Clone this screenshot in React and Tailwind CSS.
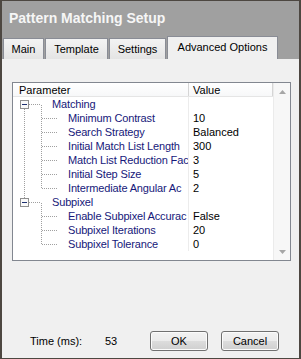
const rows = [
  { name: 'Matching', group: true, value: '' },
  { name: 'Minimum Contrast', value: '10' },
  { name: 'Search Strategy', value: 'Balanced' },
  { name: 'Initial Match List Length', value: '300' },
  { name: 'Match List Reduction Fac', value: '3' },
  { name: 'Initial Step Size', value: '5' },
  { name: 'Intermediate Angular Ac', value: '2' },
  { name: 'Subpixel', group: true, value: '' },
  { name: 'Enable Subpixel Accurac', value: 'False' },
  { name: 'Subpixel Iterations', value: '20' },
  { name: 'Subpixel Tolerance', value: '0' },
]

const tabs = [
  { label: 'Main', w: 'w-[41px]' },
  { label: 'Template', w: 'w-[63px]' },
  { label: 'Settings', w: 'w-[57px]' },
]

function TreeLines() {
  const dot = { stroke: '#a0a0a0', strokeDasharray: '1 1', shapeRendering: 'crispEdges' }
  const box = (r) => (
    <g key={'b' + r}>
      <rect x="7.5" y={3.5 + 14 * r} width="8" height="8" fill="#fafafa" stroke="#8f8f8f" shapeRendering="crispEdges" />
      <rect x="9" y={7 + 14 * r} width="5" height="1" fill="#1e3070" />
      <line x1="16" x2="28" y1={7.5 + 14 * r} y2={7.5 + 14 * r} style={dot} />
    </g>
  )
  const child = (i) => (
    <line key={'c' + i} x1="29" x2="44" y1={7.5 + 14 * i} y2={7.5 + 14 * i} style={dot} />
  )
  return (
    <svg width="60" height="154" className="absolute left-0 top-0">
      {box(0)}
      {box(7)}
      <line x1="11.5" x2="11.5" y1="12" y2="101" style={dot} />
      <line x1="28.5" x2="28.5" y1="8" y2="92" style={dot} />
      <line x1="28.5" x2="28.5" y1="106" y2="148" style={dot} />
      {[1, 2, 3, 4, 5, 6, 8, 9, 10].map(child)}
    </svg>
  )
}

function Arrow({ down }) {
  return (
    <svg width="7" height="4" viewBox="0 0 7 4">
      <path d={down ? 'M0 0H7L3.5 4Z' : 'M0 4H7L3.5 0Z'} fill="#a6a6a6" />
    </svg>
  )
}

export default function App() {
  return (
    <div
      className="w-[301px] h-[359px] flex flex-col bg-[#a0a0a0] border-t border-b border-l-2 border-r-2 border-[#4d4741] text-[11px] text-black"
      style={{ fontFamily: '"Liberation Sans", Arial, sans-serif' }}
    >
      {/* title */}
      <div className="h-[35px] flex items-center pl-[7px]">
        <span className="text-[14px] font-bold text-[#f6f6f6]">Pattern Matching Setup</span>
      </div>

      {/* tabs */}
      <div className="h-[23px] flex items-end pl-[1px] gap-[1px]">
        {tabs.map(t => (
          <div
            key={t.label}
            className={`${t.w} h-[21px] flex items-center justify-center border border-b-0 border-[#898c95] bg-[linear-gradient(#f3f3f3,#e4e4e4)] pt-[1px]`}
          >
            {t.label}
          </div>
        ))}
        <div className="w-[111px] h-[23px] flex items-center justify-center border border-b-0 border-[#898c95] bg-[#f0f0f0] pb-[1px]">
          Advanced Options
        </div>
      </div>

      {/* page */}
      <div className="flex-1 bg-[#f0f0f0] flex flex-col">
        <div className="mt-[23px] ml-[10px] w-[279px] h-[179px] border border-[#828790] bg-white flex">
          <div className="w-[260px] flex flex-col">
            <div className="h-[14px] flex border-b border-[#e5e5e5] bg-[linear-gradient(#ffffff,#f7f8f9)] leading-[13px]">
              <div className="w-[176px] border-r border-[#d5d5d5] pl-[6px] pt-[1px]">Parameter</div>
              <div className="flex-1 pl-[4px] pt-[1px] border-r border-[#d5d5d5]">Value</div>
            </div>
            <div className="relative flex flex-col">
              <TreeLines />
              {rows.map(r => (
                <div key={r.name} className="h-[14px] flex leading-[14px]">
                  <div
                    className={`w-[176px] border-r border-[#ececec] overflow-hidden whitespace-nowrap tracking-[-0.15px] text-[#16187a] ${r.group ? 'pl-[39px]' : 'pl-[55px]'}`}
                  >
                    {r.name}
                  </div>
                  <div className="flex-1 pl-[4px]">{r.value}</div>
                </div>
              ))}
            </div>
          </div>
          <div className="w-[17px] bg-[#f7f7f7] border-l border-[#ebebeb] flex flex-col justify-between">
            <div className="h-[17px] flex items-center justify-center"><Arrow /></div>
            <div className="h-[17px] flex items-center justify-center"><Arrow down /></div>
          </div>
        </div>

        <div className="mt-[70px] h-[20px] flex items-center pl-[28px]">
          <span className="w-[75px]">Time (ms):</span>
          <span className="w-[45px]">53</span>
          <button className="w-[58px] h-[20px] rounded-[3px] border border-[#707070] bg-[linear-gradient(#f2f2f2_0%,#ebebeb_50%,#dddddd_50%,#cfcfcf_100%)] shadow-[inset_0_0_0_1px_#fbfbfb]">
            OK
          </button>
          <button className="ml-[13px] w-[58px] h-[20px] rounded-[3px] border border-[#707070] bg-[linear-gradient(#f2f2f2_0%,#ebebeb_50%,#dddddd_50%,#cfcfcf_100%)] shadow-[inset_0_0_0_1px_#fbfbfb]">
            Cancel
          </button>
        </div>
      </div>
    </div>
  )
}
